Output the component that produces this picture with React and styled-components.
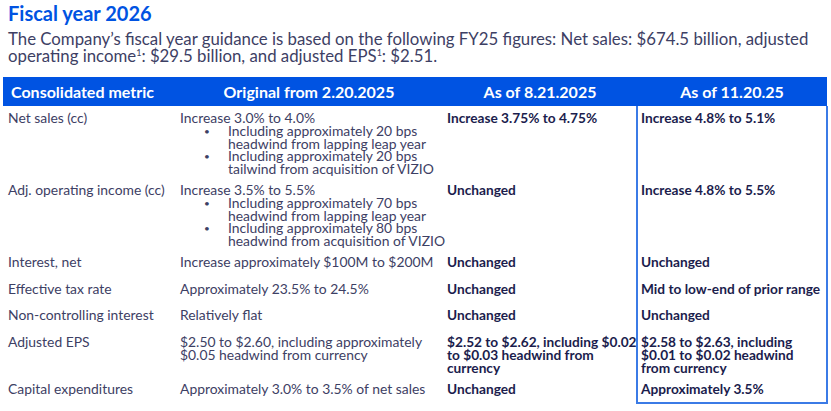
import React from 'react';
import styled, { createGlobalStyle } from 'styled-components';

const GlobalStyle = createGlobalStyle`
  body {
    margin: 0;
    background: #fff;
    font-family: Lato, "Noto Sans", sans-serif;
  }
`;

const Page = styled.div`
  width: 831px;
  padding: 0 4px 0 3px;
  box-sizing: border-box;
`;

const Title = styled.h1`
  margin: 0;
  padding: 1px 0 0 5px;
  font-size: 20px;
  line-height: 24px;
  font-weight: 700;
  color: #0053e2;
`;

const Intro = styled.p`
  margin: 6px 0 0;
  padding-left: 5px;
  font-size: 16.8px;
  line-height: 16.5px;
  color: #3d4064;
  white-space: nowrap;

  sup {
    font-size: 9px;
    vertical-align: 6px;
    line-height: 0;
  }
`;

const Table = styled.table`
  margin-top: 13px;
  width: 824px;
  border-collapse: collapse;
  table-layout: fixed;
  font-size: 14px;
`;

const HeadCell = styled.th`
  height: 29px;
  padding: 0 ${({ $left }) => ($left ? '8px' : '0')};
  background: #0053e2;
  color: #fff;
  font-size: 16px;
  font-weight: 700;
  text-align: ${({ $left }) => ($left ? 'left' : 'center')};
  vertical-align: middle;
`;

const Cell = styled.td`
  height: 26.5px;
  box-sizing: border-box;
  padding: 5px 0 3px ${({ $pad }) => $pad || 5}px;
  vertical-align: top;
  line-height: 13px;
  color: ${({ $bold }) => ($bold ? '#1b1d4d' : '#3d4064')};
  font-size: ${({ $bold }) => ($bold ? '13.7px' : '13.9px')};
  font-weight: ${({ $bold }) => ($bold ? 700 : 400)};
  border-left: ${({ $framed }) => ($framed ? '2px solid #3b7be6' : 'none')};
  border-right: ${({ $framed }) => ($framed ? '2px solid #3b7be6' : 'none')};
  border-bottom: ${({ $framed, $last }) => ($framed && $last ? '2px solid #3b7be6' : 'none')};
`;

const Line = styled.span`
  display: block;
  white-space: nowrap;
`;

const Bullets = styled.ul`
  margin: 1px 0 0;
  padding: 0 0 0 48px;
  list-style: none;
`;

const Bullet = styled.li`
  position: relative;
  line-height: 12.5px;

  &::before {
    content: '•';
    position: absolute;
    left: -24px;
    top: 0;
    font-size: 10px;
  }
`;

const rows = [
  {
    metric: 'Net sales (cc)',
    original: ['Increase 3.0% to 4.0%'],
    bullets: [
      ['Including approximately 20 bps', 'headwind from lapping leap year'],
      ['Including approximately 20 bps', 'tailwind from acquisition of VIZIO'],
    ],
    august: ['Increase 3.75% to 4.75%'],
    november: ['Increase 4.8% to 5.1%'],
  },
  {
    metric: 'Adj. operating income (cc)',
    original: ['Increase 3.5% to 5.5%'],
    bullets: [
      ['Including approximately 70 bps', 'headwind from lapping leap year'],
      ['Including approximately 80 bps', 'headwind from acquisition of VIZIO'],
    ],
    august: ['Unchanged'],
    november: ['Increase 4.8% to 5.5%'],
  },
  {
    metric: 'Interest, net',
    original: ['Increase approximately $100M to $200M'],
    august: ['Unchanged'],
    november: ['Unchanged'],
  },
  {
    metric: 'Effective tax rate',
    original: ['Approximately 23.5% to 24.5%'],
    august: ['Unchanged'],
    november: ['Mid to low-end of prior range'],
  },
  {
    metric: 'Non-controlling interest',
    original: ['Relatively flat'],
    august: ['Unchanged'],
    november: ['Unchanged'],
  },
  {
    metric: 'Adjusted EPS',
    original: ['$2.50 to $2.60, including approximately', '$0.05 headwind from currency'],
    august: ['$2.52 to $2.62, including $0.02', 'to $0.03 headwind from', 'currency'],
    november: ['$2.58 to $2.63, including', '$0.01 to $0.02 headwind', 'from currency'],
  },
  {
    metric: 'Capital expenditures',
    original: ['Approximately 3.0% to 3.5% of net sales'],
    august: ['Unchanged'],
    november: ['Approximately 3.5%'],
  },
];

const Lines = ({ items }) => items.map((t) => <Line key={t}>{t}</Line>);

const App = () => (
  <Page>
    <GlobalStyle />
    <Title>Fiscal year 2026</Title>
    <Intro>
      The Company’s fiscal year guidance is based on the following FY25 figures: Net sales: $674.5 billion, adjusted
      <br />
      operating income<sup>1</sup>: $29.5 billion, and adjusted EPS<sup>1</sup>: $2.51.
    </Intro>
    <Table>
      <colgroup>
        <col style={{ width: 172 }} />
        <col style={{ width: 268 }} />
        <col style={{ width: 194 }} />
        <col style={{ width: 190 }} />
      </colgroup>
      <thead>
        <tr>
          <HeadCell $left>Consolidated metric</HeadCell>
          <HeadCell>Original from 2.20.2025</HeadCell>
          <HeadCell>As of 8.21.2025</HeadCell>
          <HeadCell>As of 11.20.25</HeadCell>
        </tr>
      </thead>
      <tbody>
        {rows.map((row, i) => (
          <tr key={row.metric}>
            <Cell>{row.metric}</Cell>
            <Cell>
              <Lines items={row.original} />
              {row.bullets && (
                <Bullets>
                  {row.bullets.map((b) => (
                    <Bullet key={b.join(' ')}>
                      <Lines items={b} />
                    </Bullet>
                  ))}
                </Bullets>
              )}
            </Cell>
            <Cell $bold $pad={4}>
              <Lines items={row.august} />
            </Cell>
            <Cell $bold $framed $last={i === rows.length - 1} $pad={3}>
              <Lines items={row.november} />
            </Cell>
          </tr>
        ))}
      </tbody>
    </Table>
  </Page>
);

export default App;
